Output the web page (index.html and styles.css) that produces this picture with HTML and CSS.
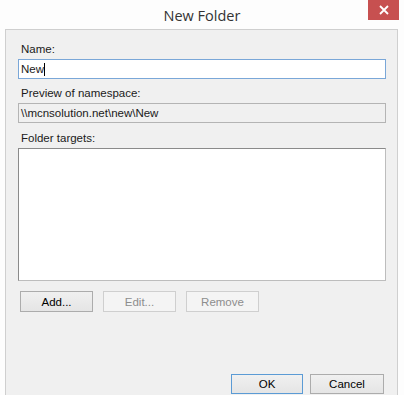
FILE: index.html
```html
<!DOCTYPE html>
<html>
<head>
<meta charset="utf-8">
<link rel="stylesheet" href="styles.css">
</head>
<body>
<div class="window">
  <div class="titlebar">
    <span class="title">New Folder</span>
    <div class="close">
      <svg width="10" height="10" viewBox="0 0 10 10"><path d="M1 1 L9 9 M9 1 L1 9" stroke="#fff" stroke-width="1.8" fill="none"/></svg>
    </div>
  </div>
  <div class="panel">
    <div class="label">Name:</div>
    <div class="field focused">New<span class="caret"></span></div>
    <div class="label gap">Preview of namespace:</div>
    <div class="field readonly">\\mcnsolution.net\new\New</div>
    <div class="label gap2">Folder targets:</div>
    <div class="listbox"></div>
    <div class="row">
      <div class="btn">Add...</div>
      <div class="btn disabled">Edit...</div>
      <div class="btn disabled">Remove</div>
    </div>
    <div class="footer">
      <div class="btn default">OK</div>
      <div class="btn wide">Cancel</div>
    </div>
  </div>
</div>
</body>
</html>
```
FILE: styles.css
```css
html, body {
  margin: 0;
  padding: 0;
  background: #fff;
}
.window {
  width: 404px;
  height: 395px;
  background: #fdfdfd;
  display: flex;
  flex-direction: column;
  overflow: hidden;
}
.titlebar {
  position: relative;
  height: 29px;
  display: flex;
  justify-content: center;
  align-items: center;
}
.title {
  font-family: "Open Sans", "Noto Sans", sans-serif;
  font-size: 14.5px;
  color: #333;
  margin-top: 2px;
}
.close {
  position: absolute;
  top: 0;
  left: 368px;
  width: 31px;
  height: 20px;
  background: #c75050;
  display: flex;
  align-items: center;
  justify-content: center;
}
.panel {
  flex: 1;
  margin: 0 6px 0 5px;
  border: 1px solid #cfcfcf;
  border-bottom: none;
  background: #f0f0f0;
  padding: 12px 11px 0 12px;
  font-family: "Liberation Sans", Arial, sans-serif;
  font-size: 11.5px;
  color: #1a1a1a;
  display: flex;
  flex-direction: column;
}
.label {
  line-height: 14px;
  height: 14px;
  padding-left: 3px;
  margin-bottom: 3px;
}
.label.gap {
  margin-top: 7px;
}
.label.gap2 {
  margin-top: 8px;
}
.field {
  height: 20px;
  box-sizing: border-box;
  line-height: 18px;
  padding-left: 2px;
  display: flex;
  align-items: center;
}
.field.focused {
  border: 1px solid #7aa7d8;
  background: #fff;
}
.caret {
  width: 1px;
  height: 13px;
  background: #000;
}
.field.readonly {
  border: 1px solid #b4b4b4;
  background: #f0f0f0;
}
.listbox {
  height: 133px;
  box-sizing: border-box;
  border: 1px solid #8a8a8a;
  border-right-color: #bdbdbd;
  border-bottom-color: #bdbdbd;
  background: #fff;
}
.row {
  display: flex;
  gap: 10px;
  margin-top: 10px;
  padding-left: 2px;
}
.btn {
  width: 73px;
  height: 21px;
  box-sizing: border-box;
  border: 1px solid #acacac;
  background: linear-gradient(#f0f0f0, #e5e5e5);
  display: flex;
  align-items: center;
  justify-content: center;
  color: #000;
}
.btn.disabled {
  border-color: #cfcfcf;
  background: #f4f4f4;
  color: #8d8d8d;
}
.footer {
  margin-top: auto;
  margin-bottom: 1px;
  display: flex;
  justify-content: flex-end;
  gap: 7px;
  margin-right: 2px;
}
.btn.default {
  border-color: #5b9bd5;
  width: 72px;
  height: 20px;
}
.btn.wide {
  width: 74px;
  height: 20px;
}
```
